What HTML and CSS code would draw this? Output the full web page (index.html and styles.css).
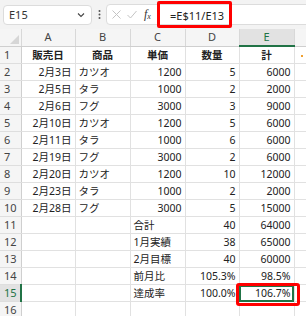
FILE: index.html
```html
<!DOCTYPE html>
<html lang="ja">
<head>
    <meta charset="UTF-8">
    <title>Excel</title>
    <link rel="stylesheet" href="styles.css">
</head>
<body>

<div class="formula-bar">
    <div class="name-box">
        <span>E15</span>
        <svg class="chev" width="8" height="6" viewBox="0 0 8 6"><path d="M1 1.5 L4 4.5 L7 1.5" fill="none" stroke="#444" stroke-width="1.1"/></svg>
    </div>
    <div class="grip">
        <svg width="3" height="11" viewBox="0 0 3 11"><circle cx="1.5" cy="2" r="1" fill="#555"/><circle cx="1.5" cy="5.5" r="1" fill="#555"/><circle cx="1.5" cy="9" r="1" fill="#555"/></svg>
    </div>
    <div class="formula-box">
        <svg class="btn" width="11" height="11" viewBox="0 0 11 11"><path d="M1.5 1.5 L9.5 9.5 M9.5 1.5 L1.5 9.5" stroke="#c4c4c4" stroke-width="1"/></svg>
        <svg class="btn" width="12" height="11" viewBox="0 0 12 11"><path d="M1.5 6 L4.5 9 L10.5 2" fill="none" stroke="#c4c4c4" stroke-width="1"/></svg>
        <span class="fx">f<sub>x</sub></span>
        <span class="formula">=E$11/E13</span>
    </div>
</div>

<div class="grid-wrap">
<table class="sheet">
    <colgroup>
        <col class="c-row"><col class="c-a"><col class="c-b"><col class="c-c"><col class="c-d"><col class="c-e"><col class="c-f">
    </colgroup>
    <thead>
        <tr>
            <th class="corner"><span class="tri"></span></th>
            <th>A</th><th>B</th><th>C</th><th>D</th><th class="sel">E</th><th></th>
        </tr>
    </thead>
    <tbody id="rows"></tbody>
</table>
<div class="mark"></div>
</div>

<script>
    const data = [
        ['販売日', '商品', '単価', '数量', '計'],
        ['2月3日', 'カツオ', '1200', '5', '6000'],
        ['2月5日', 'タラ', '1000', '2', '2000'],
        ['2月6日', 'フグ', '3000', '3', '9000'],
        ['2月10日', 'カツオ', '1200', '5', '6000'],
        ['2月11日', 'タラ', '1000', '6', '6000'],
        ['2月19日', 'フグ', '3000', '2', '6000'],
        ['2月20日', 'カツオ', '1200', '10', '12000'],
        ['2月23日', 'タラ', '1000', '2', '2000'],
        ['2月28日', 'フグ', '3000', '5', '15000'],
        ['', '', '合計', '40', '64000'],
        ['', '', '1月実績', '38', '65000'],
        ['', '', '2月目標', '40', '60000'],
        ['', '', '前月比', '105.3%', '98.5%'],
        ['', '', '達成率', '100.0%', '106.7%'],
        ['', '', '', '', '']
    ];

    const tbody = document.getElementById('rows');
    data.forEach((row, i) => {
        const tr = document.createElement('tr');
        const th = document.createElement('th');
        th.className = 'rh' + (i === 14 ? ' sel' : '');
        th.textContent = i + 1;
        tr.appendChild(th);
        row.forEach((val, j) => {
            const td = document.createElement('td');
            td.textContent = val;
            if (i === 0) td.className = 'head';
            else if (j === 1 || (j === 2 && i >= 10)) td.className = 'left';
            else td.className = 'right';
            if (i === 14 && j === 4) {
                td.classList.add('active');
            }
            tr.appendChild(td);
        });
        tr.appendChild(document.createElement('td'));
        tbody.appendChild(tr);
    });
</script>

</body>
</html>
```

FILE: styles.css
```css
body {
    margin: 0;
    width: 306px;
    height: 316px;
    overflow: hidden;
    background: #fff;
    font-family: "Noto Sans", "Noto Sans CJK JP", sans-serif;
    color: #222;
}

.formula-bar {
    display: flex;
    align-items: center;
    height: 29px;
    background: #f3f3f3;
    padding-left: 3px;
}

.name-box {
    display: flex;
    align-items: center;
    justify-content: space-between;
    box-sizing: border-box;
    width: 89px;
    height: 20px;
    background: #fff;
    border: 1px solid #dcdcdc;
    border-radius: 4px;
    padding: 0 6px 0 5px;
    font-size: 11px;
    color: #333;
}

.grip {
    display: flex;
    width: 14px;
    justify-content: center;
}

.formula-box {
    display: flex;
    align-items: center;
    box-sizing: border-box;
    flex: 1;
    height: 21px;
    margin-right: -10px;
    background: #fff;
    border: 1px solid #dcdcdc;
    border-radius: 4px;
    padding-left: 4px;
}

.btn {
    margin-right: 4px;
}

.fx {
    font-family: "Liberation Serif", serif;
    font-style: italic;
    font-size: 12px;
    color: #333;
    margin-left: 2px;
    width: 12px;
}

.fx sub {
    font-size: 8px;
    vertical-align: -1px;
}

.formula {
    box-sizing: border-box;
    height: 27px;
    width: 75px;
    margin-left: 1px;
    border: 3px solid #f00;
    border-radius: 2px;
    padding: 4px 0 0 10px;
    font-size: 11px;
    color: #222;
}

.grid-wrap {
    position: relative;
}

.sheet {
    border-collapse: collapse;
    table-layout: fixed;
    width: 320px;
    font-size: 10.5px;
}

.c-row { width: 21px; }
.c-a { width: 54px; }
.c-b { width: 55px; }
.c-c { width: 55px; }
.c-d { width: 54px; }
.c-e { width: 55px; }
.c-f { width: 26px; }

.sheet th,
.sheet td {
    height: 17px;
    padding: 0;
    line-height: 16px;
    white-space: nowrap;
    overflow: hidden;
    box-sizing: border-box;
}

.sheet thead th {
    background: #f5f5f5;
    border-right: 1px solid #d8d8d8;
    border-bottom: 1px solid #cfcfcf;
    font-weight: normal;
    color: #444;
    font-size: 11px;
}

.sheet thead th.sel {
    background: #e2e2e2;
    color: #217346;
    border-bottom: 2px solid #217346;
}

.corner {
    position: relative;
}

.tri {
    position: absolute;
    right: 2px;
    bottom: 2px;
    width: 0;
    height: 0;
    border-left: 9px solid transparent;
    border-bottom: 9px solid #d6d6d6;
}

.rh {
    background: #f5f5f5;
    border-right: 1px solid #cfcfcf;
    border-bottom: 1px solid #dedede;
    font-weight: normal;
    color: #444;
    font-size: 11px;
    text-align: left;
    padding-left: 4px !important;
}

.rh.sel {
    background: #e2e2e2;
    color: #217346;
    border-right: 2px solid #217346;
}

.sheet td {
    border-right: 1px solid #e1e1e1;
    border-bottom: 1px solid #e1e1e1;
}

.head {
    text-align: center;
    font-weight: bold;
}

.right {
    text-align: right;
    padding-right: 3px !important;
}

.left {
    text-align: left;
    padding-left: 3px !important;
}

.sheet td.active {
    position: relative;
    overflow: visible;
    outline: 2px solid #217346;
    outline-offset: -2px;
}

.active::after {
    content: '';
    position: absolute;
    left: -4px;
    top: -2px;
    right: -6px;
    bottom: -5px;
    border: 3px solid #f00;
    border-radius: 3px;
}

.mark {
    position: absolute;
    left: 301px;
    top: 26px;
    width: 2px;
    height: 2px;
    background: #f0a030;
}
```
